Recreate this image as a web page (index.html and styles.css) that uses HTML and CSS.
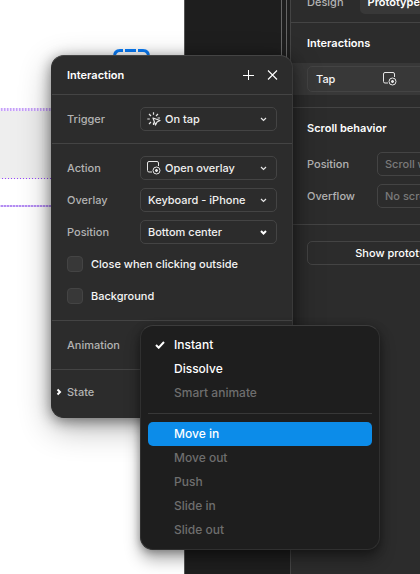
FILE: index.html
```html
<!DOCTYPE html>
<html lang="en">
<head>
<meta charset="utf-8">
<title>Prototype interaction</title>
<link rel="stylesheet" href="styles.css">
</head>
<body>
<div class="app">
  <main class="frame" aria-label="Canvas">
    <div class="guide guide-top"></div>
    <div class="block"></div>
    <div class="guide guide-thin"></div>
    <div class="guide guide-bottom"></div>
    <svg class="selection" width="37" height="20" viewBox="0 0 37 20" fill="none" stroke="#0a7dfa" stroke-width="3" aria-hidden="true">
      <path d="M1.500 20V7.500Q1.500 1.500 7 1.500H10M12 1.500H23M25 1.500H30Q35.500 1.500 35.500 7.500V20"/>
    </svg>
  </main>
  <div class="backdrop"><div class="rail"></div></div>
  <aside class="sidebar">
    <nav class="tabs">
      <button class="tab" type="button">Design</button>
      <button class="tab tab-active" type="button">Prototype</button>
    </nav>
    <section class="panel interactions">
      <h2>Interactions</h2>
      <div class="interaction-row">
        <button class="interaction" type="button">
          <span>Tap</span>
          <svg width="14" height="14" viewBox="0 0 14 14" fill="none" stroke="#e6e6e6" aria-hidden="true">
            <path d="M11.500 5V2Q11.500 .5 10 .5H2Q.5 .5 .5 2V9.500Q.5 11 2 11H5"/><circle cx="9.500" cy="9.500" r="3.500"/><path d="M9.500 8v3M8 9.500h3" stroke-width="1.500"/>
          </svg>
        </button>
      </div>
    </section>
    <section class="panel scroll">
      <h2>Scroll behavior</h2>
      <div class="side-field">
        <label for="scroll-position">Position</label>
        <select id="scroll-position" class="select select-muted"><option>Scroll with parent</option></select>
      </div>
      <div class="side-field">
        <label for="overflow">Overflow</label>
        <select id="overflow" class="select select-muted"><option>No scrolling</option></select>
      </div>
    </section>
    <section class="panel settings">
      <button class="outline" type="button">Show prototype</button>
    </section>
  </aside>
</div>

<div class="dialog" role="dialog" aria-labelledby="dialog-title">
  <header class="dialog-head">
    <h1 id="dialog-title">Interaction</h1>
    <button class="icon-button" type="button" aria-label="Add">
      <svg width="12" height="12" viewBox="0 0 12 12" fill="none" stroke="#fff" aria-hidden="true"><path d="M6.500 1v10M1 6.500h11"/></svg>
    </button>
    <button class="icon-button" type="button" aria-label="Close">
      <svg width="12" height="12" viewBox="0 0 12 12" fill="none" stroke="#fff" stroke-width="1.100" aria-hidden="true"><path d="M2 1.500l9 9M11 1.500l-9 9"/></svg>
    </button>
  </header>
  <section class="group">
    <div class="field">
      <label for="trigger">Trigger</label>
      <div class="control">
        <svg class="lead" width="14" height="14" viewBox="0 0 14 14" fill="none" stroke="#e6e6e6" aria-hidden="true">
          <path d="M6 6l7 2.500-3 1.500-1.500 3z" stroke-width="1.200" stroke-linejoin="round"/><path d="M6.500 .3v2.500M2 2l2 2M.3 7h2.500M2 12l2-2M6.500 10.500v2.500M11 2L9 4M10.500 6h2.500" stroke-width="1.200"/>
        </svg>
        <select id="trigger" class="select with-lead"><option>On tap</option></select>
        <svg class="caret" width="7" height="5" viewBox="0 0 7 5" fill="none" stroke="#e6e6e6" stroke-width="1.200" aria-hidden="true"><path d="M1 1l2.500 2.500L6 1"/></svg>
      </div>
    </div>
  </section>
  <section class="group">
    <div class="field">
      <label for="action">Action</label>
      <div class="control">
        <svg class="lead" width="14" height="14" viewBox="0 0 14 14" fill="none" stroke="#e6e6e6" aria-hidden="true">
          <path d="M11.500 5V2Q11.500 .5 10 .5H2Q.5 .5 .5 2V9.500Q.5 11 2 11H5"/><circle cx="9.500" cy="9.500" r="3.500"/><path d="M9.500 8v3M8 9.500h3" stroke-width="1.500"/>
        </svg>
        <select id="action" class="select with-lead"><option>Open overlay</option></select>
        <svg class="caret" width="7" height="5" viewBox="0 0 7 5" fill="none" stroke="#e6e6e6" stroke-width="1.200" aria-hidden="true"><path d="M1 1l2.500 2.500L6 1"/></svg>
      </div>
    </div>
    <div class="field">
      <label for="overlay">Overlay</label>
      <div class="control">
        <select id="overlay" class="select"><option>Keyboard - iPhone</option></select>
        <svg class="caret" width="7" height="5" viewBox="0 0 7 5" fill="none" stroke="#e6e6e6" stroke-width="1.200" aria-hidden="true"><path d="M1 1l2.500 2.500L6 1"/></svg>
      </div>
    </div>
    <div class="field">
      <label for="position">Position</label>
      <div class="control">
        <select id="position" class="select"><option>Bottom center</option></select>
        <svg class="caret" width="7" height="5" viewBox="0 0 7 5" fill="none" stroke="#fff" stroke-width="2" aria-hidden="true"><path d="M1 1l2.500 2.500L6 1"/></svg>
      </div>
    </div>
    <label class="check"><input type="checkbox">Close when clicking outside</label>
    <label class="check"><input type="checkbox">Background</label>
  </section>
  <section class="group">
    <div class="field"><span class="name">Animation</span></div>
  </section>
  <section class="group state">
    <button class="state-toggle" type="button">
      <svg width="6" height="8" viewBox="0 0 6 8" fill="none" stroke="#fff" stroke-width="2" aria-hidden="true"><path d="M1.500 1.500L4 4 1.500 6.500"/></svg>
      State
    </button>
  </section>
</div>

<div class="menu" role="menu" aria-label="Animation">
  <button class="item" role="menuitem" type="button">
    <svg class="tick" width="10" height="8" viewBox="0 0 10 8" fill="none" stroke="#fff" stroke-width="2" aria-hidden="true"><path d="M1 4l2.700 2.700L9 1"/></svg>
    Instant
  </button>
  <button class="item" role="menuitem" type="button">Dissolve</button>
  <button class="item" role="menuitem" type="button" disabled>Smart animate</button>
  <hr>
  <button class="item item-active" role="menuitem" type="button">Move in</button>
  <button class="item" role="menuitem" type="button" disabled>Move out</button>
  <button class="item" role="menuitem" type="button" disabled>Push</button>
  <button class="item" role="menuitem" type="button" disabled>Slide in</button>
  <button class="item" role="menuitem" type="button" disabled>Slide out</button>
</div>
</body>
</html>
```
FILE: styles.css
```css
* { box-sizing: border-box; }

body {
  margin: 0;
  overflow: hidden;
  background: #1e1e1e;
  color: #f5f5f5;
  font: 500 11px/16px Inter, "Liberation Sans", sans-serif;
}

h1, h2 { margin: 0; font-size: 11px; line-height: 16px; font-weight: 600; color: #fff; }

button, select, input { font: inherit; color: inherit; margin: 0; }
button { padding: 0; border: 0; background: none; cursor: pointer; }
svg { display: block; flex: none; }

.app { display: flex; min-height: 100vh; }

/* Canvas */
.frame {
  position: relative;
  flex: 0 0 185px;
  padding-top: 108px;
  background: #fff;
  border-right: 1px solid #555;
}
.block { height: 67px; background: #eee; }
.guide { height: 3px; }
.guide-top { background: repeating-linear-gradient(90deg, #f3eafe 0 1px, #c6a0f8 1px 2px, #dcc6fb 2px 3px); }
.guide-thin { height: 1px; background: repeating-linear-gradient(90deg, #eee 0 2px, #9747ff 2px 3px); }
.guide-bottom { height: 2px; margin-top: 26px; background: repeating-linear-gradient(90deg, #dccbfa 0 1px, #b48cf2 1px 3px); }
.selection { position: absolute; left: 113px; top: 49px; }

.backdrop { flex: 1; padding-right: 3px; }
.rail {
  width: 6px;
  height: 96px;
  margin-left: auto;
  border: solid #666;
  border-width: 0 1px;
}

/* Sidebar */
.sidebar {
  flex: 0 0 130px;
  overflow: hidden;
  background: #2c2c2c;
  border-left: 1px solid #444;
}
.tabs { display: flex; align-items: flex-end; gap: 8px; width: 240px; height: 23px; padding: 0 8px 8px; border-bottom: 1px solid #444; }
.tab { flex: none; height: 24px; padding: 0 8px; border-radius: 5px; color: #b3b3b3; }
.tab-active { background: #383838; color: #fff; font-weight: 600; }
.panel { width: 240px; padding: 0 16px; border-bottom: 1px solid #444; }
.interactions { padding: 12px 0; }
.interactions h2 { margin: 0 16px 12px; }
.interaction-row { padding: 3px 16px; background: #383838; }
.interaction {
  display: flex;
  align-items: center;
  gap: 48px;
  width: 100%;
  height: 26px;
  padding: 0 8px;
  border: 1px solid #444;
  border-radius: 5px;
}
.scroll { padding-top: 12px; padding-bottom: 16px; }
.scroll h2 { margin-bottom: 16px; }
.side-field { display: grid; grid-template-columns: 70px 1fr; align-items: center; color: #b3b3b3; }
.side-field + .side-field { margin-top: 8px; }
.settings { padding-top: 16px; border: 0; }
.outline { width: 180px; height: 24px; border: 1px solid #444; border-radius: 5px; color: #fff; }

/* Form controls */
.select {
  width: 100%;
  height: 24px;
  padding: 0 20px 0 7px;
  border: 1px solid #444;
  border-radius: 5px;
  background: transparent;
  appearance: none;
  outline: 0;
}
.select-muted { color: #7a7a7a; opacity: 1; }
.with-lead { padding-left: 24px; }
.control { position: relative; }
.lead { position: absolute; left: 7px; top: 5px; }
.caret { position: absolute; right: 10px; top: 10px; }

/* Interaction dialog */
.dialog {
  position: absolute;
  left: 51px;
  top: 55px;
  width: 242px;
  overflow: visible;
  border: 1px solid #3a3a3a;
  border-color: #444 #3a3a3a #2c2c2c #2c2c2c;
  border-radius: 13px;
  background: #2c2c2c;
  box-shadow: 0 10px 32px rgba(0, 0, 0, .3), 0 3px 14px rgba(0, 0, 0, .45);
}
.dialog-head {
  display: flex;
  align-items: center;
  height: 39px;
  padding: 0 8px 0 15px;
  border-bottom: 1px solid #444;
}
.dialog-head h1 { flex: 1; }
.icon-button { display: grid; place-items: center; width: 24px; height: 24px; }
.group { display: grid; gap: 8px; padding: 12px 15px; border-bottom: 1px solid #444; }
.field {
  display: grid;
  grid-template-columns: 73px 137px;
  align-items: center;
  min-height: 24px;
  color: #f0f0f0;
}
.field > label, .name { color: #b3b3b3; }
.check { display: flex; align-items: center; gap: 8px; height: 24px; }
.check input {
  width: 16px;
  height: 16px;
  border: 1px solid #444;
  border-radius: 4px;
  background: #383838;
  appearance: none;
}
.state { padding: 10px 4px 13px; border: 0; }
.state-toggle { display: flex; align-items: center; gap: 5px; height: 24px; color: #b3b3b3; }

/* Animation menu */
.menu {
  position: absolute;
  left: 140px;
  top: 325px;
  width: 240px;
  padding: 7px;
  border: 1px solid #303030;
  border-top-color: #3c3c3c;
  border-radius: 13px;
  background: #1e1e1e;
  box-shadow: 0 10px 16px rgba(0, 0, 0, .3), 0 2px 8px rgba(0, 0, 0, .35);
}
.item {
  position: relative;
  display: block;
  width: 100%;
  height: 24px;
  padding-left: 26px;
  border-radius: 5px;
  color: #fff;
  font-size: 12px;
  text-align: left;
}
.item:disabled { color: #6e6e6e; }
.item-active { background: #0c8ce9; }
.tick { position: absolute; left: 7px; top: 8px; }
.menu hr { height: 1px; margin: 8px 0; border: 0; background: #383838; }
```
